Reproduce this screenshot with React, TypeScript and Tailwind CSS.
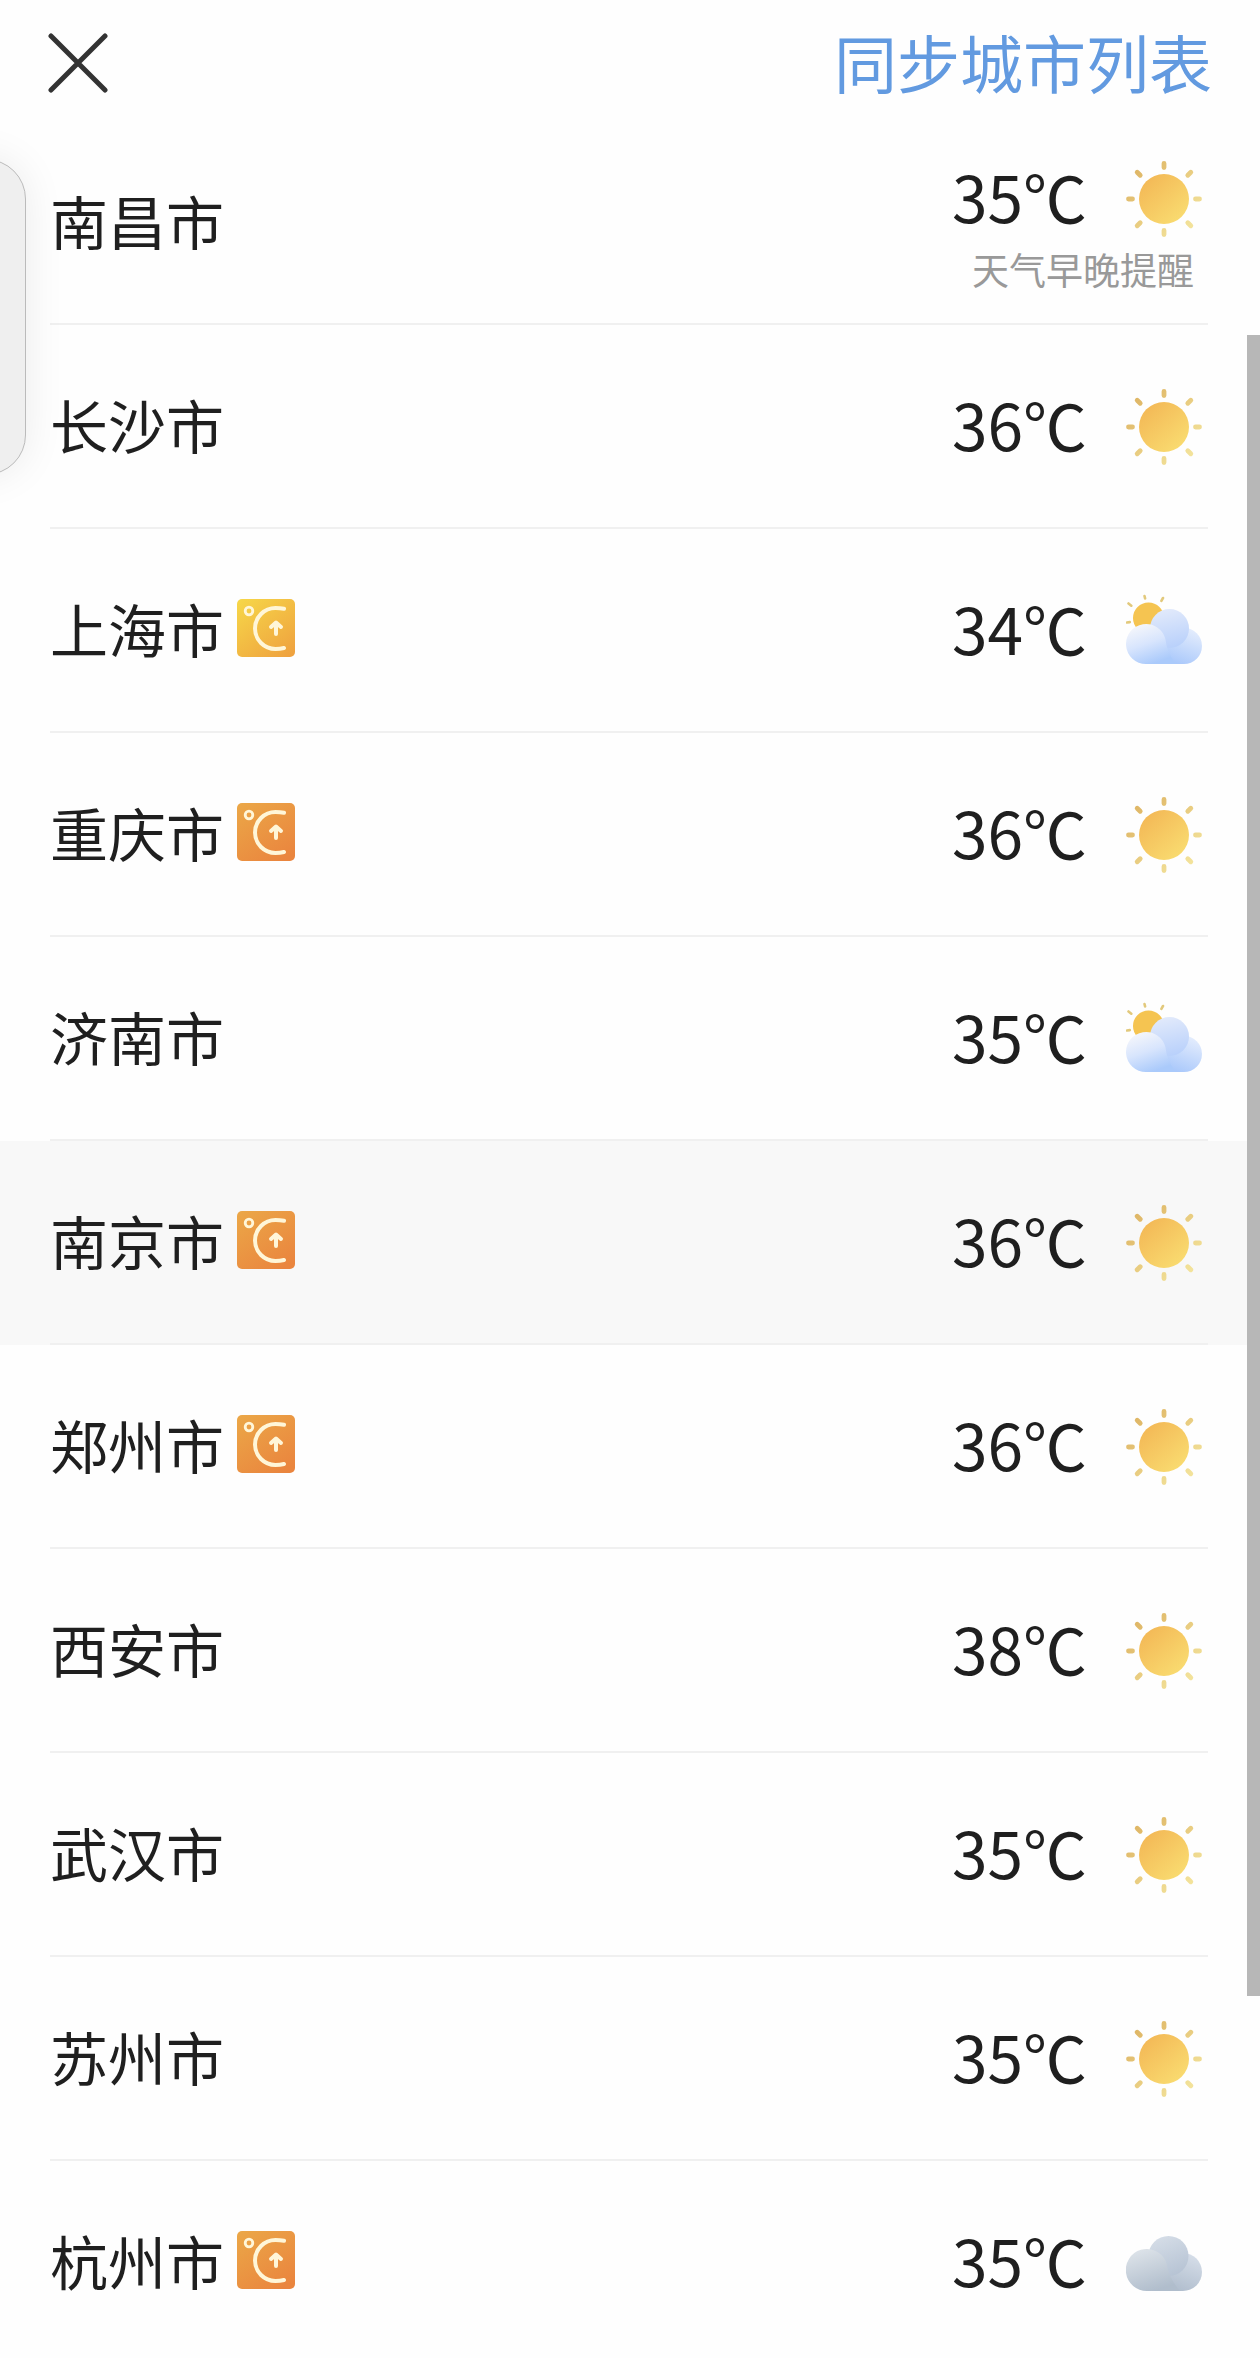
type Sky = 'sunny' | 'partly' | 'cloudy';
type Alert = 'yellow' | 'orange';

interface City {
  name: string;
  temp: number;
  sky: Sky;
  alert?: Alert;
  note?: string;
  pressed?: boolean;
}

const CITIES: City[] = [
  { name: '南昌市', temp: 35, sky: 'sunny', note: '天气早晚提醒' },
  { name: '长沙市', temp: 36, sky: 'sunny' },
  { name: '上海市', temp: 34, sky: 'partly', alert: 'yellow' },
  { name: '重庆市', temp: 36, sky: 'sunny', alert: 'orange' },
  { name: '济南市', temp: 35, sky: 'partly' },
  { name: '南京市', temp: 36, sky: 'sunny', alert: 'orange', pressed: true },
  { name: '郑州市', temp: 36, sky: 'sunny', alert: 'orange' },
  { name: '西安市', temp: 38, sky: 'sunny' },
  { name: '武汉市', temp: 35, sky: 'sunny' },
  { name: '苏州市', temp: 35, sky: 'sunny' },
  { name: '杭州市', temp: 35, sky: 'cloudy', alert: 'orange' },
];

// shared by every icon in the list
function Gradients() {
  return (
    <svg className="absolute h-0 w-0" aria-hidden="true">
      <defs>
        <linearGradient id="sun" x1="0.1" y1="0.1" x2="0.8" y2="0.9">
          <stop offset="0" stopColor="#f3b856" />
          <stop offset="1" stopColor="#f9da6f" />
        </linearGradient>
        <linearGradient id="rays" gradientUnits="userSpaceOnUse" x1="10" y1="10" x2="66" y2="66">
          <stop offset="0" stopColor="#dfb767" />
          <stop offset="1" stopColor="#f3e39b" />
        </linearGradient>
        <linearGradient id="blue-base" gradientUnits="userSpaceOnUse" x1="64" y1="34" x2="50" y2="71">
          <stop offset="0" stopColor="#e6eefd" />
          <stop offset="1" stopColor="#a9c8fb" />
        </linearGradient>
        <linearGradient id="blue-top" gradientUnits="userSpaceOnUse" x1="38" y1="16" x2="48" y2="60">
          <stop offset="0" stopColor="#e2eafb" />
          <stop offset="1" stopColor="#b3cdfb" />
        </linearGradient>
        <linearGradient id="blue-left" gradientUnits="userSpaceOnUse" x1="12" y1="31" x2="26" y2="71">
          <stop offset="0" stopColor="#f6f7fb" />
          <stop offset="0.5" stopColor="#d8e5fd" />
          <stop offset="1" stopColor="#aacafb" />
        </linearGradient>
        <linearGradient id="grey-base" gradientUnits="userSpaceOnUse" x1="64" y1="28" x2="50" y2="66">
          <stop offset="0" stopColor="#d6dee9" />
          <stop offset="1" stopColor="#b0bdcd" />
        </linearGradient>
        <linearGradient id="grey-top" gradientUnits="userSpaceOnUse" x1="34" y1="11" x2="52" y2="52">
          <stop offset="0" stopColor="#d5dde7" />
          <stop offset="1" stopColor="#b5c2d3" />
        </linearGradient>
        <linearGradient id="grey-left" gradientUnits="userSpaceOnUse" x1="14" y1="24" x2="28" y2="66">
          <stop offset="0" stopColor="#dde3e9" />
          <stop offset="1" stopColor="#b0bdcc" />
        </linearGradient>
        <linearGradient id="alert-yellow" x1="0.1" y1="0" x2="0.9" y2="1">
          <stop offset="0" stopColor="#f6d548" />
          <stop offset="1" stopColor="#efa23f" />
        </linearGradient>
        <linearGradient id="alert-orange" x1="0.1" y1="0" x2="0.8" y2="1">
          <stop offset="0" stopColor="#eba647" />
          <stop offset="1" stopColor="#ea853e" />
        </linearGradient>
      </defs>
    </svg>
  );
}

function SunIcon() {
  return (
    <svg viewBox="0 0 76 76" className="size-19" role="img" aria-label="晴">
      <circle cx="38" cy="38" r="25" fill="url(#sun)" />
      <path
        d="M38.01 2.5v4M38.01 69.5v4M2.5 38.01h4M69.5 38.01h4M11.2 11.2l3 3M61.8 61.8l3 3M64.8 11.2l-3 3M14.2 61.8l-3 3"
        stroke="url(#rays)"
        strokeWidth="4.8"
        strokeLinecap="round"
        fill="none"
      />
    </svg>
  );
}

function PartlyIcon() {
  return (
    <svg viewBox="0 0 76 76" className="size-19" role="img" aria-label="多云">
      <circle cx="22.5" cy="25" r="15.5" fill="#f5c451" />
      <path
        d="M18.5 3l.6 2.4M37 5l-1.6 2.8M2.5 10.5l2.8 2.2M1 29.500l2.800-.4"
        stroke="#e2c97c"
        strokeWidth="2.6"
        strokeLinecap="round"
        fill="none"
      />
      <path d="M20 40L58 35a18 18 0 0 1 0 36H20z" fill="url(#blue-base)" />
      <circle cx="43.5" cy="35.5" r="19.5" fill="url(#blue-top)" />
      <path d="M20 71a20 20 0 1 1 19.500-24.500Q41 60 50 71z" fill="url(#blue-left)" />
    </svg>
  );
}

function CloudyIcon() {
  return (
    <svg viewBox="0 0 76 76" className="size-19" role="img" aria-label="阴">
      <path d="M20 40L57 28a19 19 0 0 1 0 38H20z" fill="url(#grey-base)" />
      <circle cx="42.5" cy="31" r="20" fill="url(#grey-top)" />
      <path d="M21 66a21 21 0 1 1 19-29.500Q43 54 54 66z" fill="url(#grey-left)" />
    </svg>
  );
}

function SkyIcon({ sky }: { sky: Sky }) {
  if (sky === 'partly') return <PartlyIcon />;
  if (sky === 'cloudy') return <CloudyIcon />;
  return <SunIcon />;
}

function AlertBadge({ level }: { level: Alert }) {
  return (
    <svg viewBox="0 0 58 58" className="mb-1.5 size-[58px]" role="img" aria-label="高温预警">
      <rect width="58" height="58" rx="5" fill={level === 'yellow' ? 'url(#alert-yellow)' : 'url(#alert-orange)'} />
      <g stroke="#fff6d8" fill="none" strokeLinecap="round">
        <circle cx="12" cy="12" r="3.8" strokeWidth="2.8" />
        <path d="M47 9.8Q43 9 38.500 9a20.500 20.500 0 0 0 0 41Q43 50 47 49" strokeWidth="4" />
        <path d="M39 35V24M34 28l5-4.500l5 4.500" strokeWidth="4" strokeLinejoin="round" />
      </g>
    </svg>
  );
}

function CityRow({ city }: { city: City }) {
  return (
    <li className={city.pressed ? 'bg-[#f8f8f8]' : ''}>
      <button type="button" className="block w-full pr-[52px] pl-[50px] text-left">
        <span className="flex h-[204px] items-center justify-between border-b-2 border-[#f0f0f0] pt-0.5">
          <span className="flex items-center gap-[13px]">
            <span className="pb-1.5 text-[58px] leading-[80px]">{city.name}</span>
            {city.alert && <AlertBadge level={city.alert} />}
          </span>
          <span className="flex flex-col items-end pr-1.5">
            <span className="flex items-center gap-[39px]">
              <span className="pb-2 text-[64px] leading-[80px]">{city.temp}℃</span>
              <SkyIcon sky={city.sky} />
            </span>
            {city.note && <span className="mt-1 pr-2 text-[37px] leading-[44px] text-[#999]">{city.note}</span>}
          </span>
        </span>
      </button>
    </li>
  );
}

export default function App() {
  return (
    <main className="relative h-screen overflow-hidden bg-[#fefefe] font-['Noto_Sans_CJK_SC',sans-serif] text-[#1f1f1f]">
      <Gradients />
      <header className="flex h-[121px] items-center justify-between pr-12 pl-12">
        <button type="button" aria-label="关闭" className="mt-1">
          <svg viewBox="0 0 60 60" className="size-15">
            <path d="M3 3l54 54M57 3L3 57" stroke="#333" strokeWidth="5" strokeLinecap="round" />
          </svg>
        </button>
        <button type="button" className="text-[63px] leading-[88px] text-[#629ae0]">
          同步城市列表
        </button>
      </header>
      <ul>
        {CITIES.map((city) => (
          <CityRow key={city.name} city={city} />
        ))}
      </ul>

      {/* edge handle, mostly off screen */}
      <div className="absolute top-[159px] -left-20 h-[316px] w-[106px] rounded-[40px] border border-[#bbb] bg-[#efefef] shadow-[0_0_40px_rgba(0,0,0,0.08)]" />
      {/* scroll thumb */}
      <div className="absolute top-[335px] right-0 h-[1661px] w-[13px] bg-[#b7b7b7]" />
    </main>
  );
}
